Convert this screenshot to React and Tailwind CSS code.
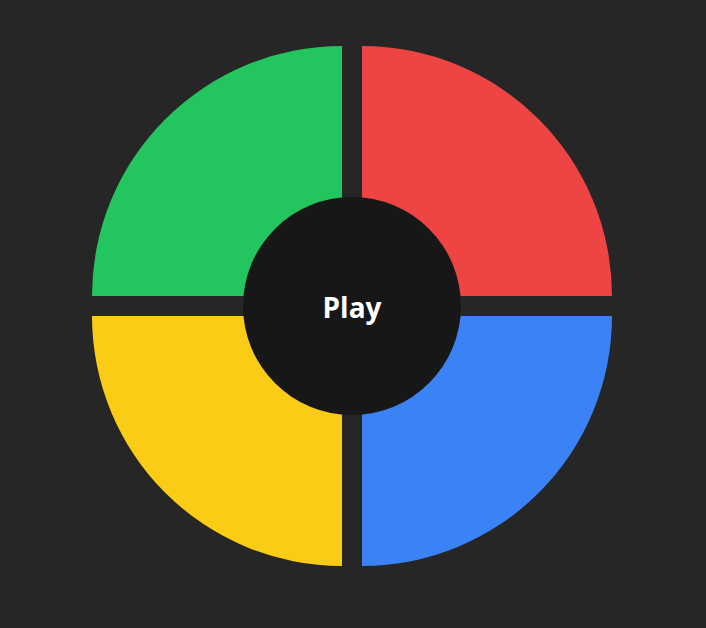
export default function App() {
  return (
    <div className="min-h-screen w-full bg-[#262626] pt-[46px] pl-[92px]" style={{ fontFamily: '"Open Sans", "Noto Sans", sans-serif' }}>
      <div className="relative w-[520px] h-[520px]">
        <div className="grid grid-cols-2 gap-5">
          <div className="w-[250px] h-[250px] bg-[#22c55e] rounded-tl-[250px]" />
          <div className="w-[250px] h-[250px] bg-[#ef4444] rounded-tr-[250px]" />
          <div className="w-[250px] h-[250px] bg-[#facc15] rounded-bl-[250px]" />
          <div className="w-[250px] h-[250px] bg-[#3b82f6] rounded-br-[250px]" />
        </div>
        <div className="absolute left-[151px] top-[151px] w-[218px] h-[218px] rounded-full bg-[#171717] flex items-center justify-center">
          <span className="text-white text-[28px] font-bold leading-none pt-[2px]">Play</span>
        </div>
      </div>
    </div>
  );
}
